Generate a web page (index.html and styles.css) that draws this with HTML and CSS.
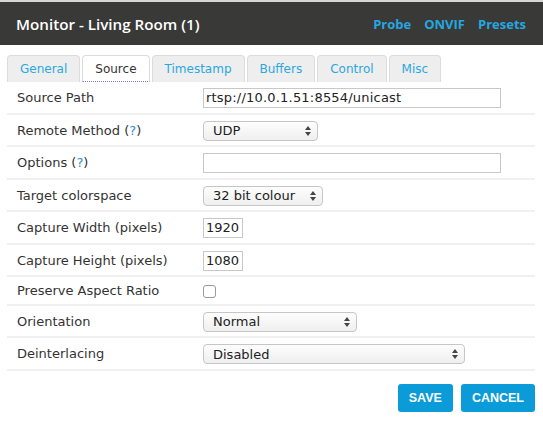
FILE: index.html
```html
<!DOCTYPE html>
<html>
<head>
<meta charset="utf-8">
<link rel="stylesheet" href="styles.css">
</head>
<body>
<div class="topline"></div>
<div class="header">
  <div class="title">Monitor - Living Room (1)</div>
  <div class="links"><a>Probe</a><a>ONVIF</a><a>Presets</a></div>
</div>
<div class="tabs">
  <div class="tab">General</div>
  <div class="tab active">Source</div>
  <div class="tab">Timestamp</div>
  <div class="tab">Buffers</div>
  <div class="tab">Control</div>
  <div class="tab">Misc</div>
</div>
<div class="form">
  <div class="row">
    <div class="label">Source Path</div>
    <div class="field"><div class="input wide">rtsp://10.0.1.51:8554/unicast</div></div>
  </div>
  <div class="row">
    <div class="label">Remote Method (<span class="q">?</span>)</div>
    <div class="field"><div class="select w-udp"><span>UDP</span><svg class="arr" width="6" height="10" viewBox="0 0 6 10"><path d="M3 0L6 4H0Z M3 10L6 6H0Z" fill="#444"/></svg></div></div>
  </div>
  <div class="row">
    <div class="label">Options (<span class="q">?</span>)</div>
    <div class="field"><div class="input wide"></div></div>
  </div>
  <div class="row">
    <div class="label">Target colorspace</div>
    <div class="field"><div class="select w-col"><span>32 bit colour</span><svg class="arr" width="6" height="10" viewBox="0 0 6 10"><path d="M3 0L6 4H0Z M3 10L6 6H0Z" fill="#444"/></svg></div></div>
  </div>
  <div class="row">
    <div class="label">Capture Width (pixels)</div>
    <div class="field"><div class="input num">1920</div></div>
  </div>
  <div class="row">
    <div class="label">Capture Height (pixels)</div>
    <div class="field"><div class="input num">1080</div></div>
  </div>
  <div class="row">
    <div class="label">Preserve Aspect Ratio</div>
    <div class="field"><div class="check"></div></div>
  </div>
  <div class="row">
    <div class="label">Orientation</div>
    <div class="field"><div class="select w-ori"><span>Normal</span><svg class="arr" width="6" height="10" viewBox="0 0 6 10"><path d="M3 0L6 4H0Z M3 10L6 6H0Z" fill="#444"/></svg></div></div>
  </div>
  <div class="row">
    <div class="label">Deinterlacing</div>
    <div class="field"><div class="select w-dei"><span>Disabled</span><svg class="arr" width="6" height="10" viewBox="0 0 6 10"><path d="M3 0L6 4H0Z M3 10L6 6H0Z" fill="#444"/></svg></div></div>
  </div>
</div>
<div class="buttons">
  <button class="btn">SAVE</button>
  <button class="btn">CANCEL</button>
</div>
</body>
</html>
```
FILE: styles.css
```css
html, body {
  margin: 0;
  padding: 0;
  background: #fff;
}
body {
  font-family: "DejaVu Sans", Verdana, sans-serif;
  font-size: 13px;
  color: #333;
}
.topline {
  height: 2px;
  background: #d6d6d6;
}
.header {
  height: 43px;
  background: #393937;
  display: flex;
  align-items: center;
  justify-content: space-between;
  padding: 0 17px 0 16px;
}
.title {
  font-family: "Open Sans", sans-serif;
  font-weight: 600;
  font-size: 15.2px;
  color: #fff;
}
.links {
  display: flex;
  gap: 13px;
}
.links a {
  font-family: "Open Sans", sans-serif;
  font-weight: 700;
  font-size: 13px;
  color: #25a7e0;
}
.tabs {
  display: flex;
  gap: 2px;
  margin-top: 10px;
  padding-left: 7px;
}
.tab {
  height: 26px;
  line-height: 27px;
  padding: 0 12px;
  font-size: 12px;
  background: #eeeeee;
  border: 1px solid #dcdcdc;
  border-bottom: none;
  border-radius: 4px 4px 0 0;
  color: #2aa8e0;
}
.tab.active {
  background: #fff;
  color: #333;
  border-bottom: 1px dotted #6f7fc0;
  height: 25px;
}
.form {
  margin: 0 8px 0 7px;
}
.row {
  display: flex;
  align-items: center;
  padding: 6px 0 4.5px;
  border-bottom: 2px solid #f0f0f0;
}
.label {
  width: 186px;
  padding-left: 10px;
  line-height: 16px;
  flex-shrink: 0;
}
.q {
  color: #2a8fd0;
}
.field {
  display: flex;
  align-items: center;
  min-height: 16px;
}
.input {
  height: 18px;
  line-height: 18px;
  border: 1px solid #c8c8c8;
  padding: 0 2px;
  color: #222;
  box-sizing: content-box;
}
.input.wide {
  width: 292px;
  letter-spacing: 0.2px;
}
.input.num {
  width: 34px;
}
.select {
  height: 18px;
  border: 1px solid #c6c6c6;
  border-radius: 4px;
  background: linear-gradient(#fdfdfd, #efefef);
  display: flex;
  align-items: center;
  justify-content: space-between;
  padding: 0 6px 0 9px;
  color: #222;
}
.w-udp { width: 98px; }
.w-col { width: 103px; }
.w-ori { width: 137px; }
.w-dei { width: 245px; }
.arr {
  display: block;
}
.check {
  width: 11px;
  height: 11px;
  border: 1px solid #9a9a9a;
  border-radius: 3px;
  background: #fff;
}
.buttons {
  display: flex;
  justify-content: flex-end;
  gap: 8px;
  margin: 13px 8px 0 0;
}
.btn {
  height: 28px;
  padding: 0 11px;
  background: #0a9bd8;
  color: #fff;
  border: none;
  border-radius: 3px;
  font-family: "Liberation Sans", Arial, sans-serif;
  font-weight: 700;
  font-size: 12.5px;
}
```
